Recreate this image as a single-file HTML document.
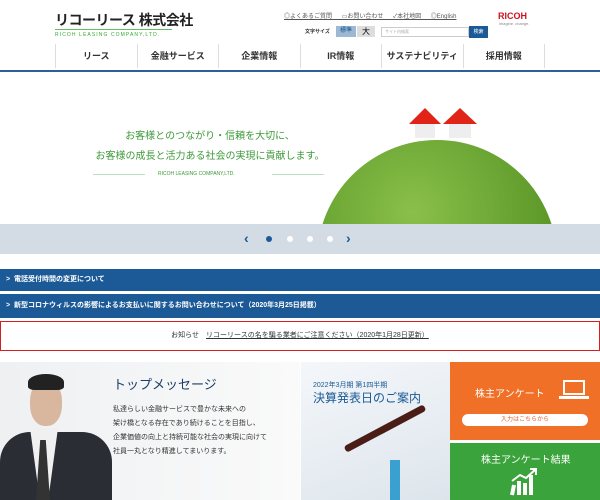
<!DOCTYPE html>
<html><head><meta charset="utf-8"><style>
*{margin:0;padding:0;box-sizing:border-box}
body{width:600px;height:500px;overflow:hidden;background:#fff;font-family:"Liberation Sans","Noto Sans CJK JP",sans-serif;position:relative}
.a{position:absolute}
.nav{display:flex;left:55px;top:44px;width:490px;height:24px}
.nav div{flex:1;border-left:1px solid #ddd;font-size:9px;text-align:center;line-height:24px;color:#333;font-weight:bold}
.nav div:last-child{border-right:1px solid #ddd}
.bar{left:0;width:600px;background:#1b5a96;color:#fff;font-size:7px;font-weight:bold;padding-left:6px}
</style></head><body>
<div class="a" style="left:55px;top:10px;font-size:14px;font-weight:bold;color:#222;letter-spacing:-0.5px;white-space:nowrap">リコーリース 株式会社</div>
<div class="a" style="left:55px;top:29px;width:117px;border-top:1px solid #6b6;"></div>
<div class="a" style="left:55px;top:32px;font-size:5px;color:#3a3;letter-spacing:1.1px">RICOH LEASING COMPANY,LTD.</div>
<div class="a" style="left:284px;top:11px;font-size:6px;color:#555;text-decoration:underline;word-spacing:8px">◎よくあるご質問 ▭お問い合わせ ✓本社地図 ◎English</div>
<div class="a" style="left:498px;top:11px;font-size:9px;font-weight:bold;color:#d0101b">RICOH</div>
<div class="a" style="left:499px;top:21px;font-size:4px;color:#888">imagine. change.</div>
<div class="a" style="left:305px;top:28px;font-size:5px;color:#333;font-weight:bold">文字サイズ</div>
<div class="a" style="left:336px;top:26px;width:20px;height:11px;background:#9cb8d3;font-size:6px;color:#1b5a96;text-align:center;line-height:11px">標準</div>
<div class="a" style="left:357px;top:26px;width:18px;height:11px;background:#ddd;font-size:8px;text-align:center;line-height:11px">大</div>
<div class="a" style="left:381px;top:27px;width:88px;height:10px;border:1px solid #ccc;font-size:4px;color:#aaa;padding-left:3px;line-height:8px">サイト内検索</div>
<div class="a" style="left:469px;top:26px;width:19px;height:12px;background:#1b5a96;color:#fff;font-size:5px;text-align:center;line-height:12px">検索</div>
<div class="a nav"><div>リース</div><div>金融サービス</div><div>企業情報</div><div>IR情報</div><div>サステナビリティ</div><div>採用情報</div></div>
<div class="a" style="left:0;top:70px;width:600px;height:2px;background:#2c5f97"></div>
<div class="a" style="left:0;top:224px;width:600px;height:30px;background:#d3dbe5"></div>
<div class="a" style="left:320px;top:140px;width:234px;height:84px;overflow:hidden"><div style="width:240px;height:240px;border-radius:50%;background:radial-gradient(circle at 40% 30%,#8ac04a,#5e9a2a 60%,#3f7a1a);margin-left:-3px"></div></div>
<svg class="a" style="left:407px;top:104px" width="72" height="36"><polygon points="2,20 18,4 34,20" fill="#e02518"/><rect x="8" y="20" width="20" height="14" fill="#eee"/><polygon points="36,20 53,4 70,20" fill="#e02518"/><rect x="42" y="20" width="22" height="14" fill="#eee"/></svg>
<div class="a" style="left:60px;top:127px;width:300px;text-align:center;color:#3d9a3a;font-size:10px;line-height:20px;white-space:nowrap">お客様とのつながり・信頼を大切に、<br>お客様の成長と活力ある社会の実現に貢献します。</div>
<div class="a" style="left:93px;top:174px;width:52px;border-top:1px solid #bde0bd"></div>
<div class="a" style="left:272px;top:174px;width:52px;border-top:1px solid #bde0bd"></div>
<div class="a" style="left:158px;top:171px;font-size:5px;color:#3d9a3a;white-space:nowrap">RICOH LEASING COMPANY,LTD.</div>
<div class="a" style="left:244px;top:230px;font-size:14px;font-weight:bold;color:#1b5a96">‹</div>
<div class="a" style="left:266px;top:236px;width:6px;height:6px;border-radius:50%;background:#1b5a96"></div>
<div class="a" style="left:287px;top:236px;width:6px;height:6px;border-radius:50%;background:#fff"></div>
<div class="a" style="left:307px;top:236px;width:6px;height:6px;border-radius:50%;background:#fff"></div>
<div class="a" style="left:327px;top:236px;width:6px;height:6px;border-radius:50%;background:#fff"></div>
<div class="a" style="left:346px;top:230px;font-size:14px;font-weight:bold;color:#1b5a96">›</div>
<div class="a bar" style="top:269px;height:22px;line-height:22px">&gt;&nbsp; 電話受付時間の変更について</div>
<div class="a bar" style="top:294px;height:24px;line-height:24px">&gt;&nbsp; 新型コロナウィルスの影響によるお支払いに関するお問い合わせについて（2020年3月25日掲載）</div>
<div class="a" style="left:0;top:321px;width:600px;height:30px;border:1px solid #d62020;text-align:center;font-size:7px;line-height:28px;color:#333">お知らせ　<u>リコーリースの名を騙る業者にご注意ください（2020年1月28日更新）</u></div>
<div class="a" style="left:0;top:362px;width:300px;height:138px;background:linear-gradient(90deg,#eef0f2,#fafafa)"></div>
<div class="a" style="left:0;top:432px;width:112px;height:68px;border-radius:30px 30px 0 0;background:#2a2d33"></div>
<div class="a" style="left:30px;top:428px;width:28px;height:72px;background:#f0f0f0;clip-path:polygon(0 0,100% 0,65% 100%,35% 100%)"></div>
<div class="a" style="left:36px;top:440px;width:14px;height:60px;background:#333;clip-path:polygon(30% 0,70% 0,100% 100%,0 100%)"></div>
<div class="a" style="left:30px;top:380px;width:32px;height:46px;border-radius:45%;background:#d9b79e"></div>
<div class="a" style="left:28px;top:374px;width:36px;height:16px;border-radius:50% 50% 20% 20%;background:#222"></div>
<div class="a" style="left:113px;top:374px;font-size:13px;color:#1b3d66">トップメッセージ</div>
<div class="a" style="left:113px;top:403px;font-size:7px;line-height:14px;color:#333;white-space:nowrap">私達らしい金融サービスで豊かな未来への<br>架け橋となる存在であり続けることを目指し、<br>企業価値の向上と持続可能な社会の実現に向けて<br>社員一丸となり精進してまいります。</div>
<div class="a" style="left:301px;top:362px;width:149px;height:138px;background:linear-gradient(160deg,#f4f7fa,#dde5ec)"></div>
<div class="a" style="left:313px;top:380px;font-size:7px;color:#1b5a96">2022年3月期 第1四半期</div>
<div class="a" style="left:313px;top:389px;font-size:12px;color:#1b5a96;white-space:nowrap">決算発表日のご案内</div>
<div class="a" style="left:340px;top:425px;width:90px;height:7px;background:#4a1e16;transform:rotate(-28deg);border-radius:3px"></div>
<div class="a" style="left:390px;top:460px;width:10px;height:40px;background:#3aa0d0"></div>
<div class="a" style="left:450px;top:362px;width:150px;height:78px;background:#f07027"></div>
<div class="a" style="left:475px;top:385px;font-size:10px;color:#fff">株主アンケート</div>
<div class="a" style="left:563px;top:380px;width:22px;height:15px;border:2px solid #fff"></div>
<div class="a" style="left:559px;top:396px;width:30px;height:3px;background:#fff"></div>
<div class="a" style="left:462px;top:414px;width:126px;height:12px;border-radius:6px;background:#fff;font-size:6px;color:#e06020;text-align:center;line-height:12px">入力はこちらから</div>
<div class="a" style="left:450px;top:443px;width:150px;height:57px;background:#3ba33b"></div>
<div class="a" style="left:481px;top:451px;font-size:10px;color:#fff">株主アンケート結果</div>
<svg class="a" style="left:510px;top:467px" width="30" height="33"><path d="M2 28 L4 18 M9 28 L9 14 M15 28 L15 16 M21 28 L21 8" stroke="#fff" stroke-width="4"/><path d="M2 14 L10 8 L16 11 L26 2 M20 2 L26 2 L26 8" stroke="#fff" stroke-width="2" fill="none"/></svg>
</body></html>
